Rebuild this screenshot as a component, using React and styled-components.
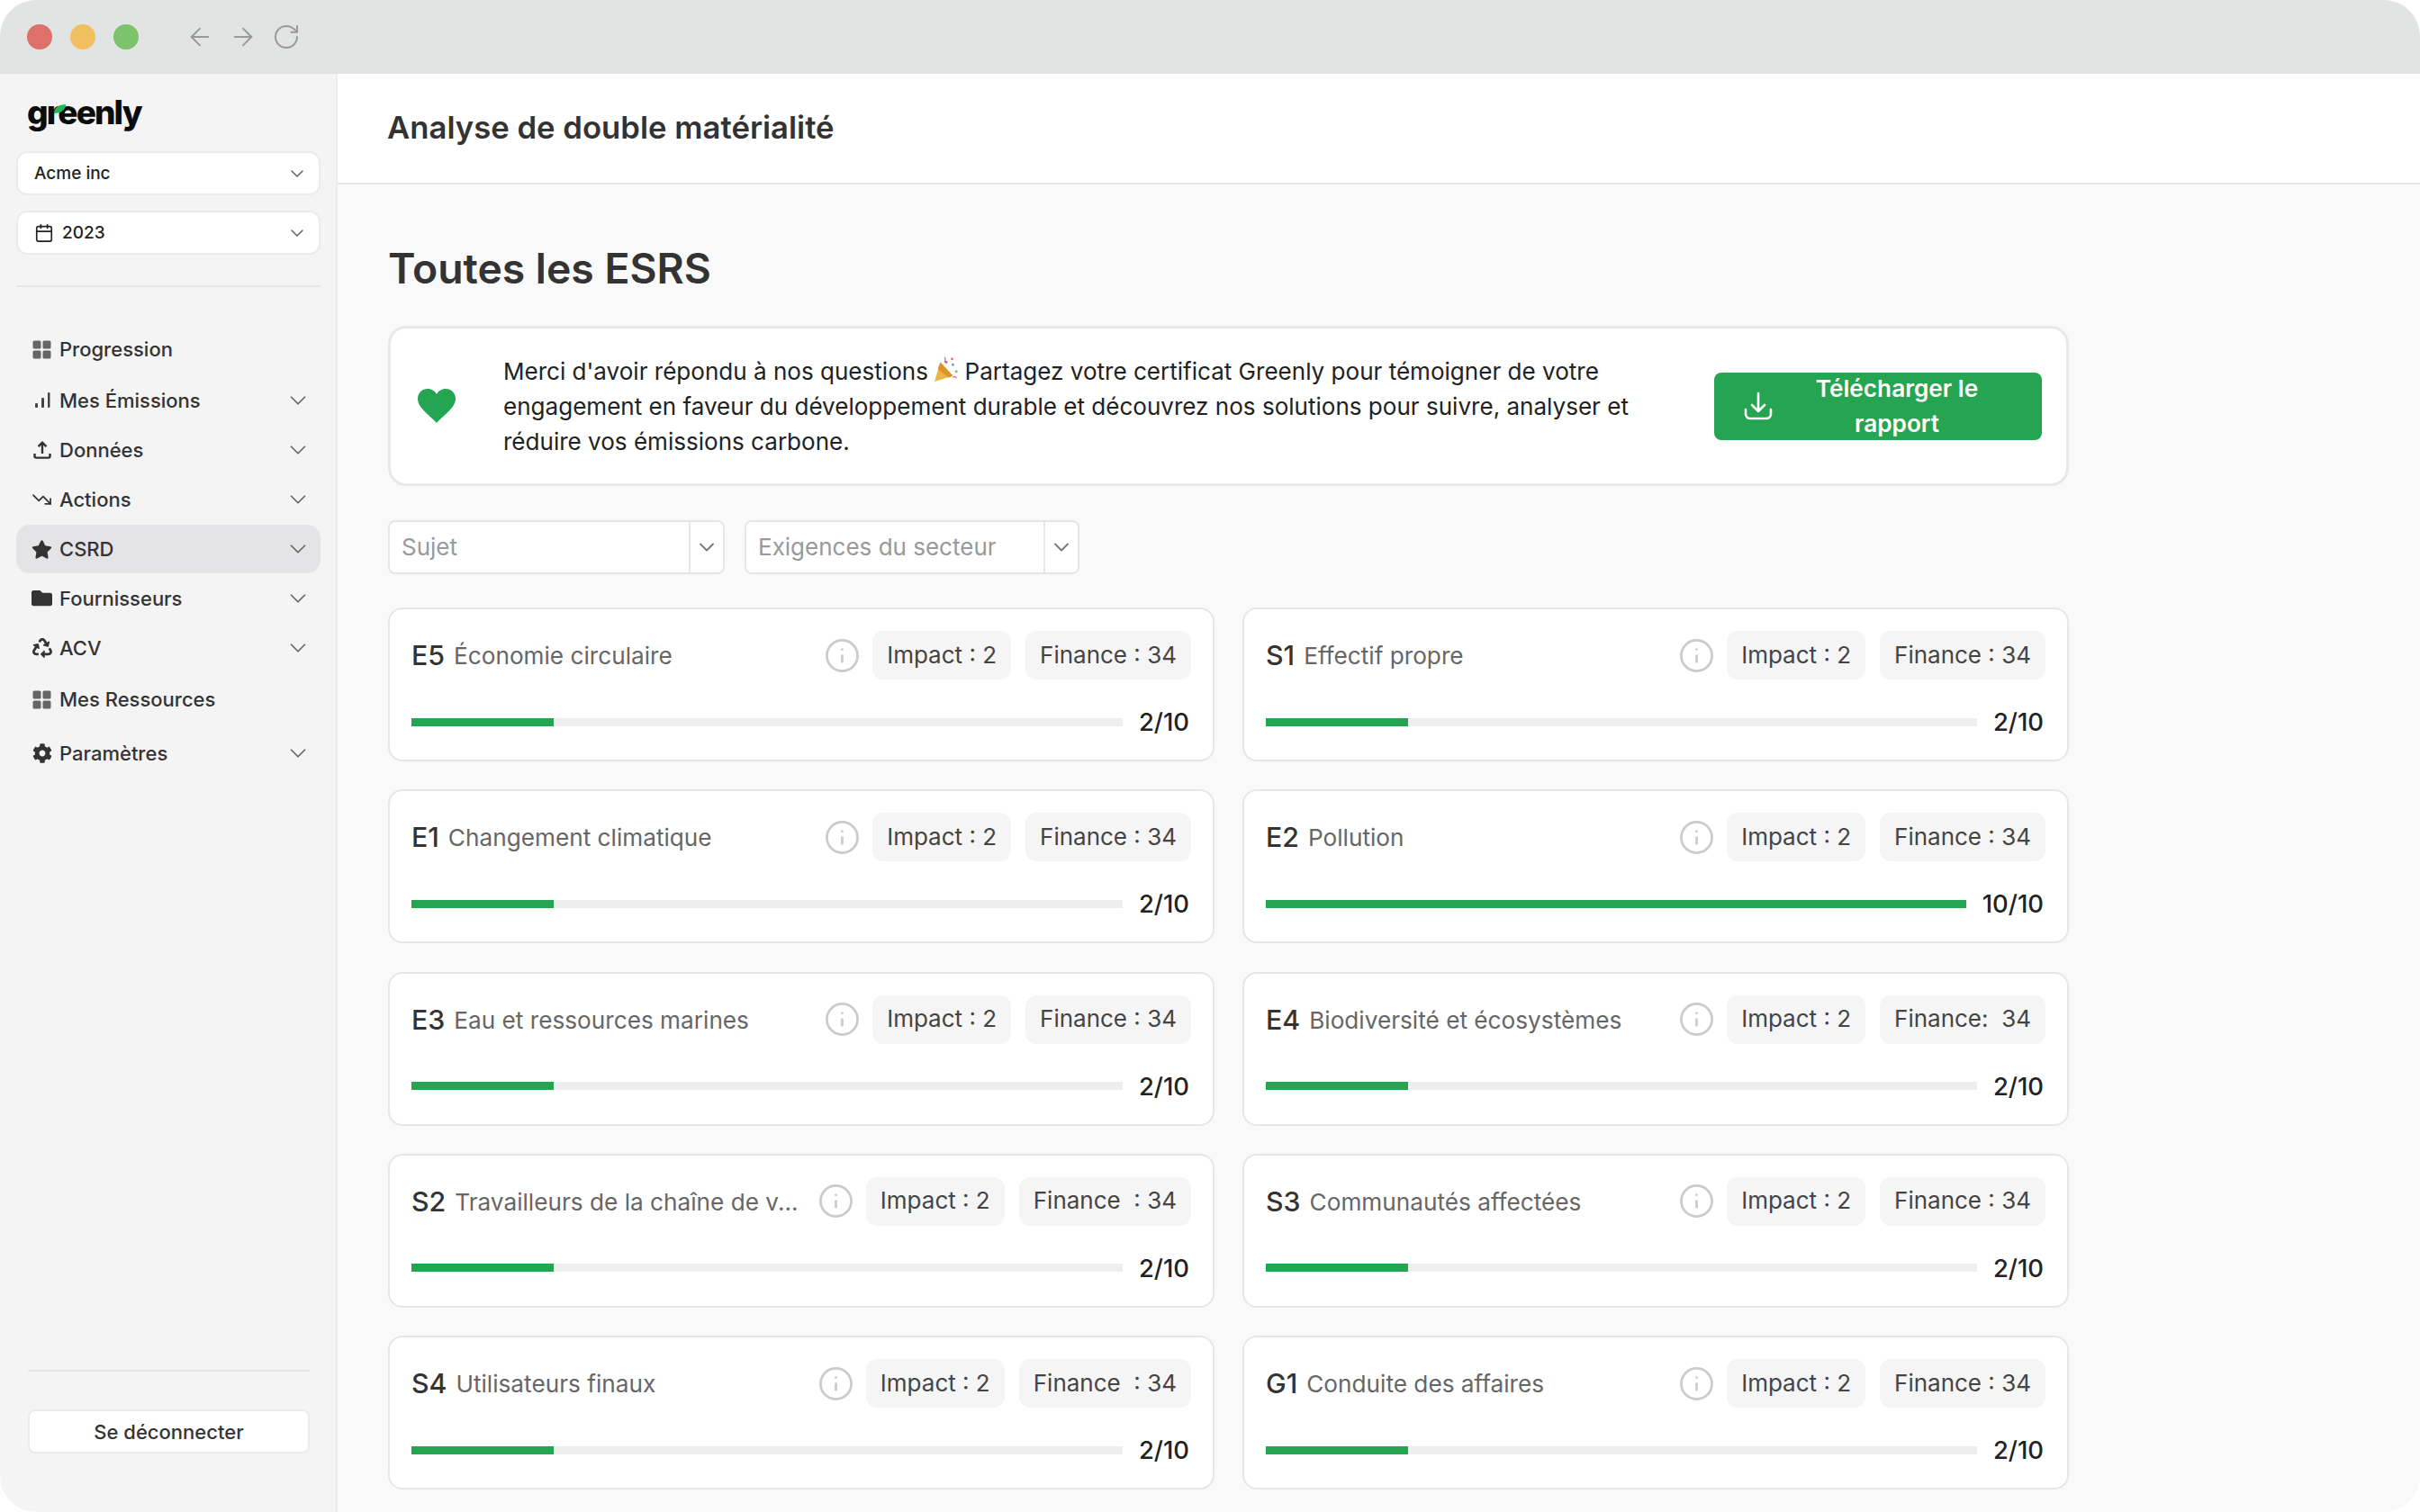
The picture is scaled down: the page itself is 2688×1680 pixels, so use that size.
import React from "react";
import styled, { createGlobalStyle } from "styled-components";
import { ArrowLeft, ArrowRight, RotateCw, ChevronDown, Calendar, Info, TrendingDown } from "lucide-react";
import { FaStar, FaFolder, FaRecycle, FaCog } from "react-icons/fa";

const GlobalStyle = createGlobalStyle`
  html, body { margin: 0; padding: 0; background: #fff; }
  * { box-sizing: border-box; }
  body { font-family: Inter, "Liberation Sans", sans-serif; color: #333; }
`;

const Window = styled.div`
  width: 2688px;
  height: 1680px;
  border-radius: 40px;
  overflow: hidden;
  display: flex;
  flex-direction: column;
`;
const TitleBar = styled.div`
  flex: 0 0 82px;
  background: #e2e4e3;
  display: flex;
  align-items: center;
  padding-left: 30px;
`;
const Dot = styled.span`
  width: 28px;
  height: 28px;
  border-radius: 50%;
  margin-right: 20px;
  background: ${p => p.$color};
`;
const BrowserNav = styled.div`
  display: flex;
  align-items: center;
  gap: 16px;
  margin-left: 32px;
  color: #999;
`;
const Body = styled.div`
  flex: 1;
  display: flex;
  min-height: 0;
`;

const Sidebar = styled.aside`
  flex: 0 0 375px;
  background: #f4f4f4;
  border-right: 2px solid #ececec;
  padding: 24px 17px 65px 18px;
  display: flex;
  flex-direction: column;
`;
const Logo = styled.div`
  position: relative;
  width: max-content;
  margin-left: 12px;
  font-size: 37px;
  line-height: 38px;
  height: 38px;
  font-weight: 800;
  letter-spacing: -1.9px;
  color: #0c0c0c;
`;
const Leaf = styled.svg`
  position: absolute;
  left: 30px;
  top: 10px;
  width: 13px;
  height: 10px;
`;
const SelectBox = styled.div`
  height: 49px;
  margin-top: ${p => p.$top}px;
  background: #fff;
  border: 2px solid #ebebeb;
  border-radius: 12px;
  display: flex;
  align-items: center;
  padding: 0 12px 0 18px;
  gap: 9px;
  font-size: 19px;
  font-weight: 500;
  color: #222;
`;
const SelectLabel = styled.span`
  flex: 1;
`;
const SideDivider = styled.div`
  height: 2px;
  background: #e6e6e6;
  margin: 34px 0 39px;
`;
const NavList = styled.nav`
  display: flex;
  flex-direction: column;
`;
const NavItem = styled.div`
  height: ${p => (p.$tall ? 60 : 54.86)}px;
  display: flex;
  align-items: center;
  padding: 0 10px 0 17px;
  border-radius: 15px;
  font-size: 22px;
  font-weight: 500;
  color: #333;
  background: ${p => (p.$active ? "#e4e4e6" : "transparent")};
`;
const NavIcon = styled.span`
  width: 23px;
  height: 24px;
  margin-right: 8px;
  display: flex;
  align-items: center;
  justify-content: center;
`;
const NavLabel = styled.span`
  flex: 1;
`;
const SideFooter = styled.div`
  margin-top: auto;
  padding: 0 12px 0 13px;
`;
const FooterLine = styled.div`
  height: 2px;
  background: #e6e6e6;
  margin-bottom: 42px;
`;
const LogoutButton = styled.div`
  height: 49px;
  background: #fff;
  border: 2px solid #ebebeb;
  border-radius: 8px;
  display: flex;
  align-items: center;
  justify-content: center;
  font-size: 22px;
  font-weight: 500;
  color: #333;
`;

const Content = styled.div`
  flex: 1;
  min-width: 0;
  display: flex;
  flex-direction: column;
  background: #f9f9f9;
`;
const TopBar = styled.header`
  flex: 0 0 123px;
  background: #fff;
  border-bottom: 2px solid #e8e8e8;
  display: flex;
  align-items: center;
  padding: 0 0 4px 55px;
  font-size: 34.7px;
  font-weight: 600;
  color: #333;
`;
const Main = styled.main`
  padding: 64px 0 0 56px;
  width: 1923px;
`;
const Heading = styled.h1`
  margin: 0 0 35px;
  font-size: 46.3px;
  line-height: 58px;
  font-weight: 600;
  color: #333;
`;
const Banner = styled.section`
  height: 178px;
  background: #fff;
  border: 3px solid #e8e8e8;
  border-radius: 20px;
  display: flex;
  align-items: center;
  padding: 0 27px 0 30px;
`;
const HeartIcon = styled.svg`
  width: 42px;
  height: 38px;
  flex: none;
  margin-right: 53px;
  margin-top: -1px;
`;
const BannerText = styled.div`
  width: 1280px;
  font-size: 26.05px;
  line-height: 39px;
  color: #222;
`;
const BannerLine = styled.span`
  display: block;
`;
const Popper = styled.svg`
  width: 26px;
  height: 30px;
  vertical-align: -3px;
`;
const DownloadButton = styled.div`
  flex: none;
  width: 364px;
  height: 75px;
  background: #25a551;
  border-radius: 8px;
  display: flex;
  align-items: center;
  padding-left: 33px;
  color: #fff;
  font-size: 26.2px;
  line-height: 39px;
  font-weight: 600;
  text-align: center;
  margin-left: auto;
`;
const DownloadLabel = styled.span`
  flex: 1;
  padding: 0 53px 0 30px;
`;
const Filters = styled.div`
  display: flex;
  gap: 22px;
  margin: 38px 0 37px;
`;
const FilterSelect = styled.div`
  width: ${p => p.$width}px;
  height: 60px;
  background: #fff;
  border: 2px solid #e6e6e6;
  border-radius: 8px;
  display: flex;
  align-items: stretch;
  font-size: 26px;
  color: #999;
`;
const FilterLabel = styled.span`
  flex: 1;
  display: flex;
  align-items: center;
  padding: 0 0 1px 13px;
  border-right: 2px solid #e6e6e6;
`;
const FilterArrow = styled.span`
  flex: 0 0 36px;
  display: flex;
  align-items: center;
  justify-content: center;
  color: #777;
`;
const CardGrid = styled.div`
  display: grid;
  grid-template-columns: 918px 918px;
  gap: 31.3px 31px;
`;
const Card = styled.article`
  height: 171px;
  background: #fff;
  border: 2px solid #e6e6e6;
  border-radius: 16px;
  padding: 24px 24px 0 24px;
`;
const CardTop = styled.div`
  display: flex;
  align-items: center;
  height: 54px;
`;
const Code = styled.span`
  font-size: 30.3px;
  font-weight: 500;
  color: #333;
  margin-right: 10px;
`;
const Name = styled.span`
  flex: 1;
  min-width: 0;
  font-size: 26.2px;
  color: #666;
  white-space: nowrap;
  margin-top: 1px;
`;
const InfoIcon = styled.span`
  display: flex;
  color: #cbcbcb;
  margin-right: 13px;
`;
const Pill = styled.span`
  height: 54px;
  display: flex;
  align-items: center;
  padding: 0 16px 2px;
  margin-left: ${p => p.$gap || 0}px;
  background: #f5f5f5;
  border-radius: 12px;
  font-size: 26px;
  color: #444;
  white-space: pre;
`;
const ProgressRow = styled.div`
  display: flex;
  align-items: center;
  margin-top: 31px;
  height: 32px;
`;
const Track = styled.div`
  flex: 1;
  height: 9px;
  background: #eeeeee;
`;
const Fill = styled.div`
  height: 100%;
  background: #25a551;
`;
const Score = styled.span`
  margin-left: 18px;
  font-size: 27.4px;
  font-weight: 500;
  color: #222;
  padding-right: 2px;
`;

const GridGlyph = () => (
  <svg width="21" height="21" viewBox="0 0 21 21" fill="#666">
    <rect x="0.5" y="0.5" width="9" height="9" rx="1.5" />
    <rect x="11.5" y="0.5" width="9" height="9" rx="1.5" />
    <rect x="0.5" y="11.5" width="9" height="9" rx="1.5" />
    <rect x="11.5" y="11.5" width="9" height="9" rx="1.5" />
  </svg>
);
const BarsGlyph = () => (
  <svg width="20" height="20" viewBox="0 0 20 20" fill="#444">
    <rect x="2" y="13" width="3" height="5" rx="1" />
    <rect x="9" y="7" width="3" height="11" rx="1" />
    <rect x="16" y="1" width="2.5" height="17" rx="1" />
  </svg>
);
const UploadGlyph = () => (
  <svg width="22" height="22" viewBox="0 0 22 22" fill="none" stroke="#333" strokeWidth="2.4">
    <path d="M11 15V3M6.5 7.2L11 2.8l4.5 4.4" />
    <path d="M2.5 15v3a1.6 1.6 0 0 0 1.6 1.6h13.8a1.6 1.6 0 0 0 1.6-1.6v-3" />
  </svg>
);

const navItems = [
  { label: "Progression", icon: <GridGlyph />, tall: true },
  { label: "Mes Émissions", icon: <BarsGlyph />, chevron: true },
  { label: "Données", icon: <UploadGlyph />, chevron: true },
  { label: "Actions", icon: <TrendingDown size={24} strokeWidth={1.8} />, chevron: true },
  { label: "CSRD", icon: <FaStar size={23} />, chevron: true, active: true },
  { label: "Fournisseurs", icon: <FaFolder size={23} />, chevron: true },
  { label: "ACV", icon: <FaRecycle size={22} />, chevron: true },
  { label: "Mes Ressources", icon: <GridGlyph />, tall: true },
  { label: "Paramètres", icon: <FaCog size={22} />, chevron: true, tall: true },
];

const cards = [
  { code: "E5", name: "Économie circulaire", value: 2 },
  { code: "S1", name: "Effectif propre", value: 2 },
  { code: "E1", name: "Changement climatique", value: 2 },
  { code: "E2", name: "Pollution", value: 10 },
  { code: "E3", name: "Eau et ressources marines", value: 2 },
  { code: "E4", name: "Biodiversité et écosystèmes", value: 2, finance: "Finance:  34" },
  { code: "S2", name: "Travailleurs de la chaîne de v...", value: 2, finance: "Finance  : 34" },
  { code: "S3", name: "Communautés affectées", value: 2 },
  { code: "S4", name: "Utilisateurs finaux", value: 2, finance: "Finance  : 34" },
  { code: "G1", name: "Conduite des affaires", value: 2 },
];

export default function App() {
  return (
    <Window>
      <GlobalStyle />
      <TitleBar>
        <Dot $color="#de706b" />
        <Dot $color="#f0c060" />
        <Dot $color="#7dc36b" />
        <BrowserNav>
          <ArrowLeft size={32} strokeWidth={1.5} />
          <ArrowRight size={32} strokeWidth={1.5} />
          <RotateCw size={32} strokeWidth={1.5} />
        </BrowserNav>
      </TitleBar>
      <Body>
        <Sidebar>
          <Logo>
            greenly
            <Leaf viewBox="0 0 13 10">
              <path d="M0 10C0 4 5 0 13 0c0 6-5 10-13 10z" fill="#25b556" />
            </Leaf>
          </Logo>
          <SelectBox $top={24}>
            <SelectLabel>Acme inc</SelectLabel>
            <ChevronDown size={24} strokeWidth={1.6} color="#666" />
          </SelectBox>
          <SelectBox $top={17}>
            <Calendar size={22} strokeWidth={1.8} color="#222" />
            <SelectLabel>2023</SelectLabel>
            <ChevronDown size={24} strokeWidth={1.6} color="#666" />
          </SelectBox>
          <SideDivider />
          <NavList>
            {navItems.map(item => (
              <NavItem key={item.label} $tall={item.tall} $active={item.active}>
                <NavIcon>{item.icon}</NavIcon>
                <NavLabel>{item.label}</NavLabel>
                {item.chevron && <ChevronDown size={30} strokeWidth={1.4} color="#666" />}
              </NavItem>
            ))}
          </NavList>
          <SideFooter>
            <FooterLine />
            <LogoutButton>Se déconnecter</LogoutButton>
          </SideFooter>
        </Sidebar>
        <Content>
          <TopBar>Analyse de double matérialité</TopBar>
          <Main>
            <Heading>Toutes les ESRS</Heading>
            <Banner>
              <HeartIcon viewBox="0 0 42 38">
                <path d="M21 38C13 29 0 21 0 11 0 4.500 5 0 11 0c4.500 0 8 2.400 10 6 2-3.600 5.500-6 10-6 6 0 11 4.500 11 11 0 10-13 18-21 27z" fill="#25a551" />
              </HeartIcon>
              <BannerText>
                <BannerLine>
                  Merci d'avoir répondu à nos questions{" "}
                  <Popper viewBox="0 0 28 30">
                    <path d="M0 30L7 7l15 16z" fill="#eab544" />
                    <path d="M7 7l15 16-5 2.500L4 15z" fill="#d9952c" />
                    <circle cx="14" cy="7" r="1.600" fill="#e0598b" />
                    <circle cx="22" cy="10" r="1.600" fill="#5aa5e0" />
                    <circle cx="21" cy="3" r="1.400" fill="#e0598b" />
                    <circle cx="26" cy="18" r="1.600" fill="#7dc36b" />
                    <path d="M12 1c2 2 1 4 0 6M22 25c1-1 4-1 4 1" stroke="#e0598b" strokeWidth="1.300" fill="none" />
                  </Popper>{" "}
                  Partagez votre certificat Greenly pour témoigner de votre
                </BannerLine>
                <BannerLine>
                  engagement en faveur du développement durable et découvrez nos solutions pour suivre, analyser et réduire vos émissions carbone.
                </BannerLine>
              </BannerText>
              <DownloadButton>
                <svg width="32" height="32" viewBox="0 0 32 32" fill="none" stroke="#fff" strokeWidth="2.6" strokeLinecap="round" strokeLinejoin="round">
                  <path d="M16 2v20M9 15l7 7 7-7" />
                  <path d="M2 20v5a5 5 0 0 0 5 5h18a5 5 0 0 0 5-5v-5" />
                </svg>
                <DownloadLabel>Télécharger le rapport</DownloadLabel>
              </DownloadButton>
            </Banner>
            <Filters>
              <FilterSelect $width={374}>
                <FilterLabel>Sujet</FilterLabel>
                <FilterArrow><ChevronDown size={28} strokeWidth={1.6} /></FilterArrow>
              </FilterSelect>
              <FilterSelect $width={372}>
                <FilterLabel>Exigences du secteur</FilterLabel>
                <FilterArrow><ChevronDown size={28} strokeWidth={1.6} /></FilterArrow>
              </FilterSelect>
            </Filters>
            <CardGrid>
              {cards.map(card => (
                <Card key={card.code}>
                  <CardTop>
                    <Code>{card.code}</Code>
                    <Name>{card.name}</Name>
                    <InfoIcon><Info size={41} strokeWidth={1.6} /></InfoIcon>
                    <Pill>Impact : 2</Pill>
                    <Pill $gap={16}>{card.finance || "Finance : 34"}</Pill>
                  </CardTop>
                  <ProgressRow>
                    <Track>
                      <Fill style={{ width: `${card.value * 10}%` }} />
                    </Track>
                    <Score>{card.value}/10</Score>
                  </ProgressRow>
                </Card>
              ))}
            </CardGrid>
          </Main>
        </Content>
      </Body>
    </Window>
  );
}
